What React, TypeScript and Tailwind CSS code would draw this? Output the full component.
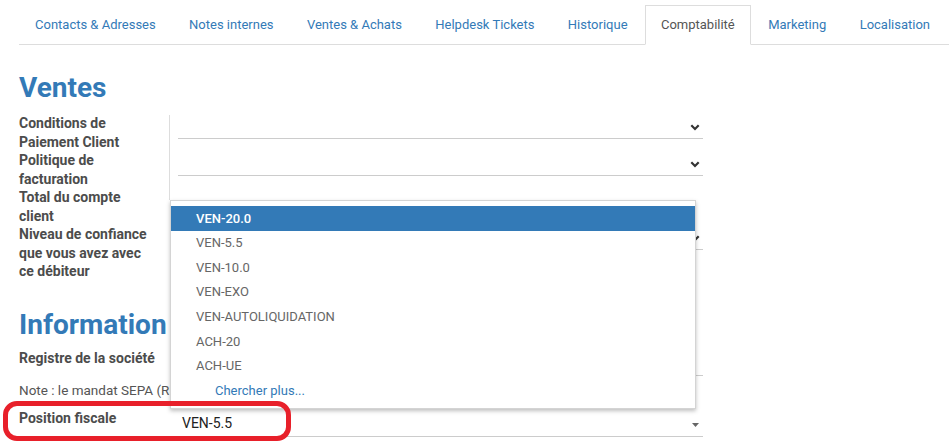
import React from "react";

const tabs = [
  "Contacts & Adresses",
  "Notes internes",
  "Ventes & Achats",
  "Helpdesk Tickets",
  "Historique",
  "Comptabilité",
  "Marketing",
  "Localisation",
];

const taxOptions = [
  "VEN-20.0",
  "VEN-5.5",
  "VEN-10.0",
  "VEN-EXO",
  "VEN-AUTOLIQUIDATION",
  "ACH-20",
  "ACH-UE",
];

function Chevron() {
  return (
    <svg
      width="10"
      height="7"
      viewBox="0 0 10 7"
      className="absolute right-[3px] top-[10px]"
    >
      <path d="M1.3 1.3 L5 5 L8.7 1.3" fill="none" stroke="#333" strokeWidth="2.2" />
    </svg>
  );
}

function Caret() {
  return (
    <svg width="7" height="4" viewBox="0 0 7 4" className="absolute right-[4px] top-[14px]">
      <polygon points="0,0 7,0 3.5,4" fill="#666" />
    </svg>
  );
}

function SelectField() {
  return <div className="relative h-[25px] border-b border-[#ccc]"><Chevron /></div>;
}

function Label({ children }: { children: React.ReactNode }) {
  return (
    <div className="text-[14px] leading-[18.5px] font-bold text-[#4c4c4c]">{children}</div>
  );
}

export default function App() {
  return (
    <div className="relative w-[949px] h-[443px] overflow-hidden bg-white font-[Roboto,sans-serif]">
      {/* Notebook tabs */}
      <ul className="flex mt-[5px] ml-[19px] border-b border-[#ddd] whitespace-nowrap">
        {tabs.map((t) => {
          const active = t === "Comptabilité";
          return (
            <li key={t} className="-mb-px mr-[1.4px] shrink-0">
              <span
                className={
                  active
                    ? "block px-[15px] py-[9px] leading-5 text-[13px] border border-[#ddd] border-b-white bg-white text-[#555]"
                    : "block px-[15px] py-[9px] leading-5 text-[13px] border border-transparent text-[#337ab7]"
                }
              >
                {t}
              </span>
            </li>
          );
        })}
      </ul>

      <div className="pl-[19px]">
        <h2 className="mt-[26px] mb-[9px] text-[28px] leading-[34px] font-bold text-[#337ab7]">
          Ventes
        </h2>
        <div className="grid grid-cols-[130px_525px] gap-x-[29px]">
          <Label>Conditions de Paiement Client</Label>
          <div><SelectField /></div>
          <Label>Politique de facturation</Label>
          <div><SelectField /></div>
          <Label>Total du compte client</Label>
          <div />
          <Label>Niveau de confiance que vous avez avec ce débiteur</Label>
          <div><SelectField /></div>
        </div>

        <h2 className="mt-[27px] mb-[7px] text-[28px] leading-[34px] font-bold text-[#337ab7]">
          Information
        </h2>
        <div className="grid grid-cols-[130px_525px] gap-x-[29px]">
          <div className="text-[14px] leading-[18.5px] font-bold text-[#4c4c4c] whitespace-nowrap">
            Registre de la société
          </div>
          <div className="h-[27px] border-b border-[#ccc]" />
          <div className="col-span-2 w-[151px] overflow-hidden pt-[5px] text-[13.5px] leading-[18.5px] text-[#555] whitespace-nowrap">
            Note : le mandat SEPA (RUM)
          </div>
          <div className="mt-[10px] text-[14px] leading-[18.5px] font-bold text-[#4c4c4c] whitespace-nowrap">
            Position fiscale
          </div>
          <div className="relative mt-[10px] h-[28px] border-b border-[#ccc] pt-[4px] pl-[4px] text-[14px] leading-5 text-[#222]">
            VEN-5.5
            <Caret />
          </div>
        </div>
      </div>

      {/* Autocomplete menu open on the fiscal position field */}
      <div className="absolute left-[169px] top-[115px] h-[85px] w-px bg-[#ddd]" />
      <div className="absolute left-[170px] top-[200px] w-[526px] border border-[#d4d4d4] bg-white py-[5px] shadow-[0_2px_4px_rgba(0,0,0,0.25)]">
        {taxOptions.map((o, i) => (
          <div
            key={o}
            className={
              i === 0
                ? "flex h-[24.6px] items-center pl-[25px] text-[13px] font-medium text-white bg-[#337ab7]"
                : "flex h-[24.6px] items-center pl-[25px] text-[13px] text-[#666]"
            }
          >
            {o}
          </div>
        ))}
        <div className="flex h-[24.6px] items-center pl-[44px] text-[13px] text-[#337ab7]">
          Chercher plus...
        </div>
      </div>

      {/* Highlight around the fiscal position row */}
      <div className="absolute left-[3px] top-[401px] w-[288px] h-[40px] rounded-[14px] border-[5px] border-[#e8202a]" />
    </div>
  );
}
